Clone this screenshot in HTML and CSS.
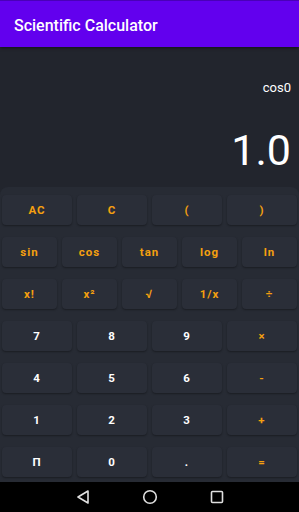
FILE: index.html
```html
<!DOCTYPE html>
<html lang="en">
<head>
    <meta charset="UTF-8">
    <meta name="viewport" content="width=device-width, initial-scale=1.0">
    <title>Scientific Calculator</title>
    <link rel="stylesheet" href="styles.css">
</head>
<body>

    <div class="app-bar">Scientific Calculator</div>

    <div class="display">
        <div class="expression">cos0</div>
        <div class="result">1.0</div>
    </div>

    <div class="keypad">
        <div class="row four">
            <button class="key op">AC</button>
            <button class="key op">C</button>
            <button class="key op">(</button>
            <button class="key op">)</button>
        </div>
        <div class="row five">
            <button class="key op">sin</button>
            <button class="key op">cos</button>
            <button class="key op">tan</button>
            <button class="key op">log</button>
            <button class="key op">ln</button>
        </div>
        <div class="row five">
            <button class="key op">x!</button>
            <button class="key op">x²</button>
            <button class="key op">√</button>
            <button class="key op">1/x</button>
            <button class="key op">÷</button>
        </div>
        <div class="row four">
            <button class="key">7</button>
            <button class="key">8</button>
            <button class="key">9</button>
            <button class="key op">×</button>
        </div>
        <div class="row four">
            <button class="key">4</button>
            <button class="key">5</button>
            <button class="key">6</button>
            <button class="key op">-</button>
        </div>
        <div class="row four">
            <button class="key">1</button>
            <button class="key">2</button>
            <button class="key">3</button>
            <button class="key op">+</button>
        </div>
        <div class="row four">
            <button class="key">Π</button>
            <button class="key">0</button>
            <button class="key">.</button>
            <button class="key op">=</button>
        </div>
    </div>

    <div class="nav-bar">
        <svg width="16" height="16" viewBox="0 0 16 16">
            <path d="M13 2 L3 8 L13 14 Z" fill="none" stroke="#e0e0e0" stroke-width="1.6" stroke-linejoin="round"/>
        </svg>
        <svg width="16" height="16" viewBox="0 0 16 16">
            <circle cx="8" cy="8" r="6.3" fill="none" stroke="#e0e0e0" stroke-width="1.6"/>
        </svg>
        <svg width="16" height="16" viewBox="0 0 16 16">
            <rect x="2.5" y="2.5" width="11" height="11" rx="1" fill="none" stroke="#e0e0e0" stroke-width="1.6"/>
        </svg>
    </div>

</body>
</html>
```

FILE: styles.css
```css
* {
    box-sizing: border-box;
}

body {
    margin: 0;
    width: 299px;
    height: 512px;
    font-family: Roboto, "Noto Sans", sans-serif;
    background-color: #22252d;
    overflow: hidden;
}

/* top bar */
.app-bar {
    height: 47px;
    background-color: #6200ee;
    border-top: 1px solid #4a00b8;
    color: #fff;
    font-size: 16px;
    font-weight: 500;
    padding: 2px 0 0 14px;
    display: flex;
    align-items: center;
    box-shadow: 0 1px 3px rgba(0, 0, 0, 0.5);
    position: relative;
}

/* expression and answer */
.display {
    height: 140px;
    padding: 33px 8px 0 0;
    display: flex;
    flex-direction: column;
    align-items: flex-end;
    color: #fff;
}

.expression {
    font-size: 13px;
    line-height: 16px;
}

.result {
    margin-top: 28px;
    font-size: 43px;
    line-height: 52px;
    font-weight: 400;
}

/* buttons */
.keypad {
    height: 295px;
    background-color: #272b34;
    border-radius: 8px 8px 0 0;
    padding: 8px 2px 0;
    display: flex;
    flex-direction: column;
    gap: 12px;
}

.row {
    display: grid;
    gap: 5px;
    height: 30px;
}

.row.four {
    grid-template-columns: repeat(4, 1fr);
}

.row.five {
    grid-template-columns: repeat(5, 1fr);
}

.key {
    border: none;
    border-radius: 4px;
    background-color: #2a2e38;
    box-shadow: 0 1px 2px rgba(0, 0, 0, 0.35);
    color: #fff;
    font-family: Roboto, "Noto Sans", sans-serif;
    font-size: 11.5px;
    font-weight: 700;
    letter-spacing: 1px;
    padding: 0;
}

.key.op {
    color: #f5a00f;
}

/* android nav */
.nav-bar {
    height: 30px;
    background-color: #000;
    display: flex;
    justify-content: center;
    align-items: center;
    gap: 51px;
}
```
